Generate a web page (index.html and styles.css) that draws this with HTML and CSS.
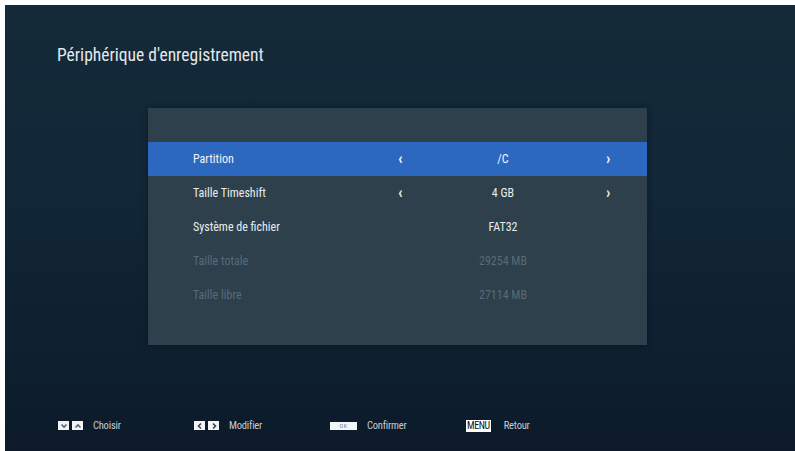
FILE: index.html
```html
<!DOCTYPE html>
<html lang="fr">
<head>
<meta charset="utf-8">
<title>Périphérique d'enregistrement</title>
<link rel="stylesheet" href="styles.css">
</head>
<body>
<div class="screen">
  <h1 class="title">Périphérique d'enregistrement</h1>
  <div class="panel">
    <div class="row active">
      <span class="label">Partition</span>
      <span class="arrow">&lsaquo;</span>
      <span class="value">/C</span>
      <span class="arrow">&rsaquo;</span>
    </div>
    <div class="row">
      <span class="label">Taille Timeshift</span>
      <span class="arrow">&lsaquo;</span>
      <span class="value">4 GB</span>
      <span class="arrow">&rsaquo;</span>
    </div>
    <div class="row">
      <span class="label">Système de fichier</span>
      <span class="arrow"></span>
      <span class="value">FAT32</span>
      <span class="arrow"></span>
    </div>
    <div class="row disabled">
      <span class="label">Taille totale</span>
      <span class="arrow"></span>
      <span class="value">29254 MB</span>
      <span class="arrow"></span>
    </div>
    <div class="row disabled">
      <span class="label">Taille libre</span>
      <span class="arrow"></span>
      <span class="value">27114 MB</span>
      <span class="arrow"></span>
    </div>
  </div>
  <div class="footer">
    <div class="hint">
      <span class="keys">
        <span class="key key-sq"><svg viewBox="0 0 10 8" width="10" height="8"><path d="M2.5 2.5 L5 5 L7.5 2.5" fill="none" stroke="#5a6470" stroke-width="1.6"/></svg></span>
        <span class="key key-sq"><svg viewBox="0 0 10 8" width="10" height="8"><path d="M2.5 5.5 L5 3 L7.5 5.5" fill="none" stroke="#5a6470" stroke-width="1.6"/></svg></span>
      </span>
      <span class="hint-text">Choisir</span>
    </div>
    <div class="hint">
      <span class="keys">
        <span class="key key-sq"><svg viewBox="0 0 10 8" width="10" height="8"><path d="M6 1.5 L3.5 4 L6 6.5" fill="none" stroke="#3a4450" stroke-width="1.6"/></svg></span>
        <span class="key key-sq"><svg viewBox="0 0 10 8" width="10" height="8"><path d="M4 1.5 L6.5 4 L4 6.5" fill="none" stroke="#3a4450" stroke-width="1.6"/></svg></span>
      </span>
      <span class="hint-text">Modifier</span>
    </div>
    <div class="hint">
      <span class="key key-ok">OK</span>
      <span class="hint-text">Confirmer</span>
    </div>
    <div class="hint hint-menu">
      <span class="key key-menu">MENU</span>
      <span class="hint-text">Retour</span>
    </div>
  </div>
</div>
</body>
</html>
```
FILE: styles.css
```css
html, body {
  margin: 0;
  padding: 0;
  background: #ffffff;
}

body {
  font-family: "Roboto Condensed", "Liberation Sans Narrow", "DejaVu Sans Condensed", Roboto, sans-serif;
}

.screen {
  margin: 5px 0 0 5px;
  width: 790px;
  height: 446px;
  background: linear-gradient(180deg, #142a39 0%, #112636 45%, #0e1f2f 80%, #0c1a29 100%);
  display: flex;
  flex-direction: column;
  overflow: hidden;
}

.title {
  margin: 40px 0 0 52px;
  font-size: 17.5px;
  font-weight: normal;
  line-height: 20px;
  color: #e4e8ec;
}

.panel {
  margin: 43px 0 0 143px;
  width: 499px;
  height: 237px;
  box-sizing: border-box;
  padding-top: 34px;
  background: #2d404b;
  box-shadow: 0 0 6px rgba(0, 0, 0, 0.35);
  display: flex;
  flex-direction: column;
}

.row {
  height: 34px;
  display: grid;
  grid-template-columns: 205px 10px 198px 10px;
  align-items: center;
  padding-left: 45px;
  font-size: 12px;
  color: #e8ecef;
}

.row.active {
  background: #2c68c0;
  color: #f2f5fa;
}

.row.disabled {
  color: #566c78;
}

.arrow {
  font-size: 16px;
  font-weight: bold;
  line-height: 12px;
}

.value {
  text-align: center;
  padding-right: 8px;
}

.footer {
  margin-top: auto;
  margin-bottom: 19px;
  padding-left: 53px;
  display: flex;
  align-items: center;
}

.hint {
  width: 136px;
  display: flex;
  align-items: center;
  gap: 10px;
}

.hint-menu {
  gap: 13px;
}

.keys {
  display: flex;
  gap: 3px;
}

.key {
  background: #f2f4f6;
  display: flex;
  align-items: center;
  justify-content: center;
}

.key-sq {
  width: 11px;
  height: 9px;
}

.key-ok {
  width: 27px;
  height: 8px;
  font-size: 6px;
  color: #7a828c;
  letter-spacing: 0.5px;
}

.key-menu {
  height: 12px;
  padding: 0 1px;
  font-size: 10px;
  letter-spacing: -0.4px;
  line-height: 12px;
  color: #111111;
  background: #ffffff;
}

.hint-text {
  font-size: 10.5px;
  letter-spacing: -0.2px;
  color: #c4ccd6;
}
```
